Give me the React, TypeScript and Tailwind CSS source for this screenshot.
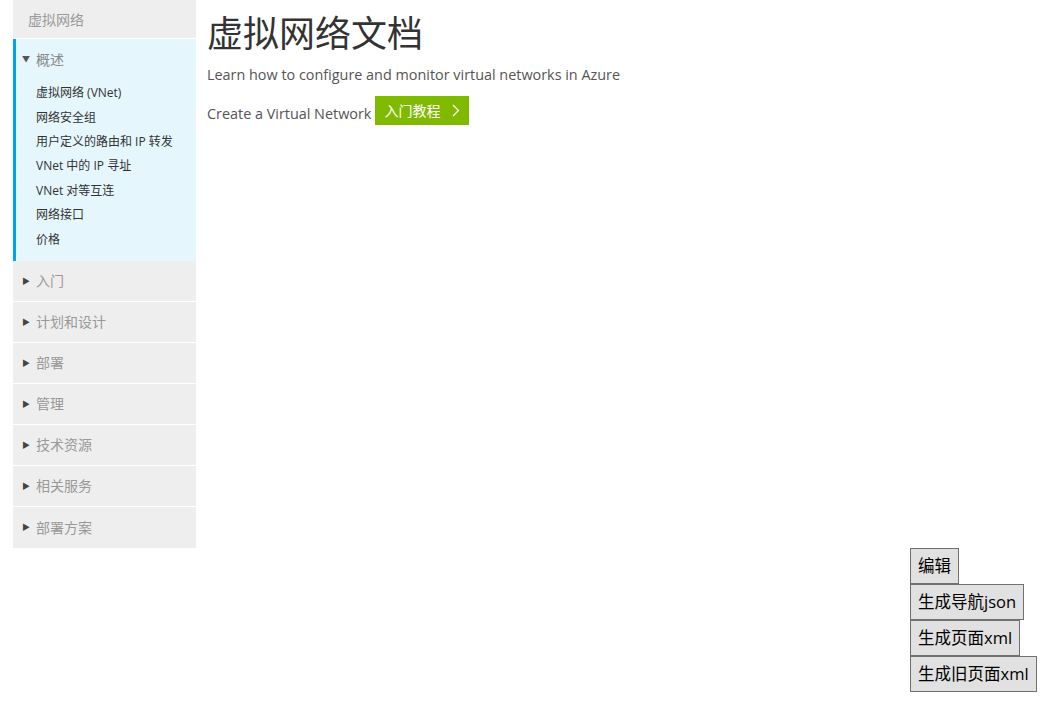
import React from 'react';

const font = { fontFamily: '"Open Sans", "Noto Sans CJK SC", sans-serif' };

const children = [
  '虚拟网络 (VNet)',
  '网络安全组',
  '用户定义的路由和 IP 转发',
  'VNet 中的 IP 寻址',
  'VNet 对等互连',
  '网络接口',
  '价格',
];

const sections = ['入门', '计划和设计', '部署', '管理', '技术资源', '相关服务', '部署方案'];

const tools = ['编辑', '生成导航json', '生成页面xml', '生成旧页面xml'];

export default function App() {
  return (
    <div className="relative min-h-[710px] w-full bg-white flex items-start" style={font}>
      <aside className="ml-[13px] w-[183px] shrink-0 bg-[#eeeeee]">
        <div className="h-[39px] pl-[15px] flex items-center text-[14px] text-[#999999] border-b border-white">
          虚拟网络
        </div>
        <div className="bg-[#e5f6fd] border-l-[3px] border-[#00a4ef] pb-[9px]">
          <div className="h-[40px] flex items-center pl-[6px] text-[14px] text-[#888888]">
            <span className="text-[8px] text-[#555555] w-[14px]">▼</span>
            <span>概述</span>
          </div>
          <ul className="pl-[20px] pt-[2px] text-[12px] text-[#333333]">
            {children.map((c) => (
              <li key={c} className="h-[24.4px] flex items-center">{c}</li>
            ))}
          </ul>
        </div>
        {sections.map((s, i) => (
          <div
            key={s}
            className={`h-[41px] flex items-center pl-[9px] text-[14px] text-[#999999] ${i < sections.length - 1 ? 'border-b border-white' : ''}`}
          >
            <span className="text-[8px] text-[#444444] w-[14px]">▶</span>
            <span>{s}</span>
          </div>
        ))}
      </aside>

      <main className="pl-[11px] pt-[10px]">
        <h1 className="text-[36px] leading-[48px] text-[#333333]">虚拟网络文档</h1>
        <p className="mt-[6px] text-[14.4px] text-[#555555]">Learn how to configure and monitor virtual networks in Azure</p>
        <div className="mt-[10px] flex items-end text-[14.4px] text-[#555555]">
          <span className="pb-[0px]">Create a Virtual Network</span>
          <button className="ml-[4px] h-[29px] px-[9px] bg-[#7fba00] text-white text-[14px] flex items-center gap-[12px]">
            入门教程
            <svg width="8" height="13" viewBox="0 0 8 13" fill="none" stroke="white" strokeWidth="1.2">
              <path d="M1 1l5.5 5.5L1 12" />
            </svg>
          </button>
        </div>
      </main>

      <div className="absolute left-[910px] top-[548px] flex flex-col items-start">
        {tools.map((t) => (
          <button
            key={t}
            className="h-[36px] px-[7px] bg-[#e1e1e1] border border-[#707070] text-[16.5px] text-black"
          >
            {t}
          </button>
        ))}
      </div>
    </div>
  );
}
